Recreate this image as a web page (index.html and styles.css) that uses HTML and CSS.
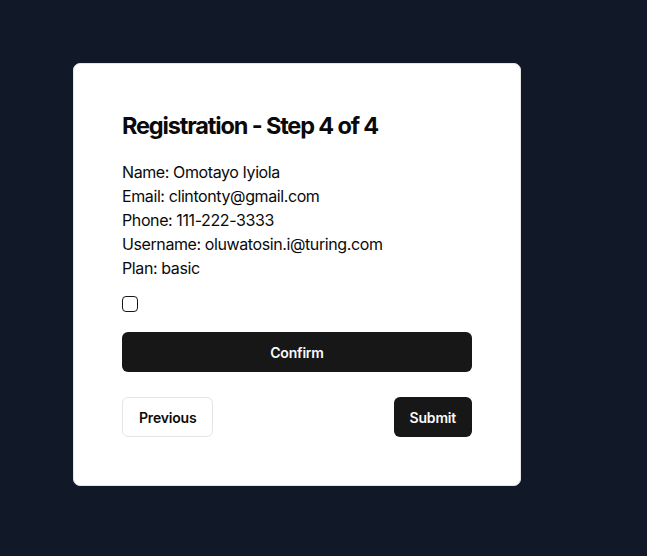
FILE: index.html
```html
<!DOCTYPE html>
<html>
<head>
<meta charset="utf-8">
<link rel="stylesheet" href="styles.css">
</head>
<body>
<div class="page">
  <div class="card">
    <h2 class="title">Registration - Step 4 of 4</h2>
    <div class="details">
      <p>Name: Omotayo Iyiola</p>
      <p>Email: clintonty@gmail.com</p>
      <p>Phone: 111-222-3333</p>
      <p>Username: oluwatosin.i@turing.com</p>
      <p>Plan: basic</p>
    </div>
    <div class="check-row"><span class="checkbox"></span></div>
    <button class="btn btn-dark btn-full">Confirm</button>
    <div class="nav-row">
      <button class="btn btn-light">Previous</button>
      <button class="btn btn-dark">Submit</button>
    </div>
  </div>
</div>
</body>
</html>
```

FILE: styles.css
```css
* { box-sizing: border-box; }
html, body {
  margin: 0;
  padding: 0;
  background: #111827;
  font-family: Inter, "Noto Sans", sans-serif;
  color: #0a0a0a;
}
.page {
  width: 647px;
  height: 556px;
  padding: 63px 0 0 73px;
}
.card {
  width: 448px;
  background: #ffffff;
  border: 1px solid #e5e5e5;
  border-radius: 7px;
  padding: 48px;
}
.title {
  margin: 0 0 20px 0;
  font-size: 23.5px;
  line-height: 28px;
  font-weight: 700;
  letter-spacing: -1.15px;
  color: #0a0a0a;
}
.details p {
  margin: 0;
  font-size: 16px;
  line-height: 24px;
  letter-spacing: -0.4px;
  color: #0a0a0a;
}
.check-row {
  margin-top: 16px;
  height: 16px;
  display: flex;
}
.checkbox {
  width: 16px;
  height: 16px;
  border: 1px solid #171717;
  border-radius: 4px;
  background: #fff;
}
.btn {
  font-family: Inter, "Noto Sans", sans-serif;
  font-size: 14px;
  font-weight: 600;
  letter-spacing: -0.2px;
  height: 40px;
  border-radius: 6px;
  padding: 0 16px;
  cursor: pointer;
}
.btn-dark {
  background: #171717;
  color: #fafafa;
  border: none;
}
.btn-light {
  background: #ffffff;
  color: #0a0a0a;
  border: 1px solid #e5e5e5;
}
.btn-full {
  display: block;
  width: 100%;
  margin-top: 20px;
}
.nav-row {
  margin-top: 25px;
  display: flex;
  justify-content: space-between;
}
```
